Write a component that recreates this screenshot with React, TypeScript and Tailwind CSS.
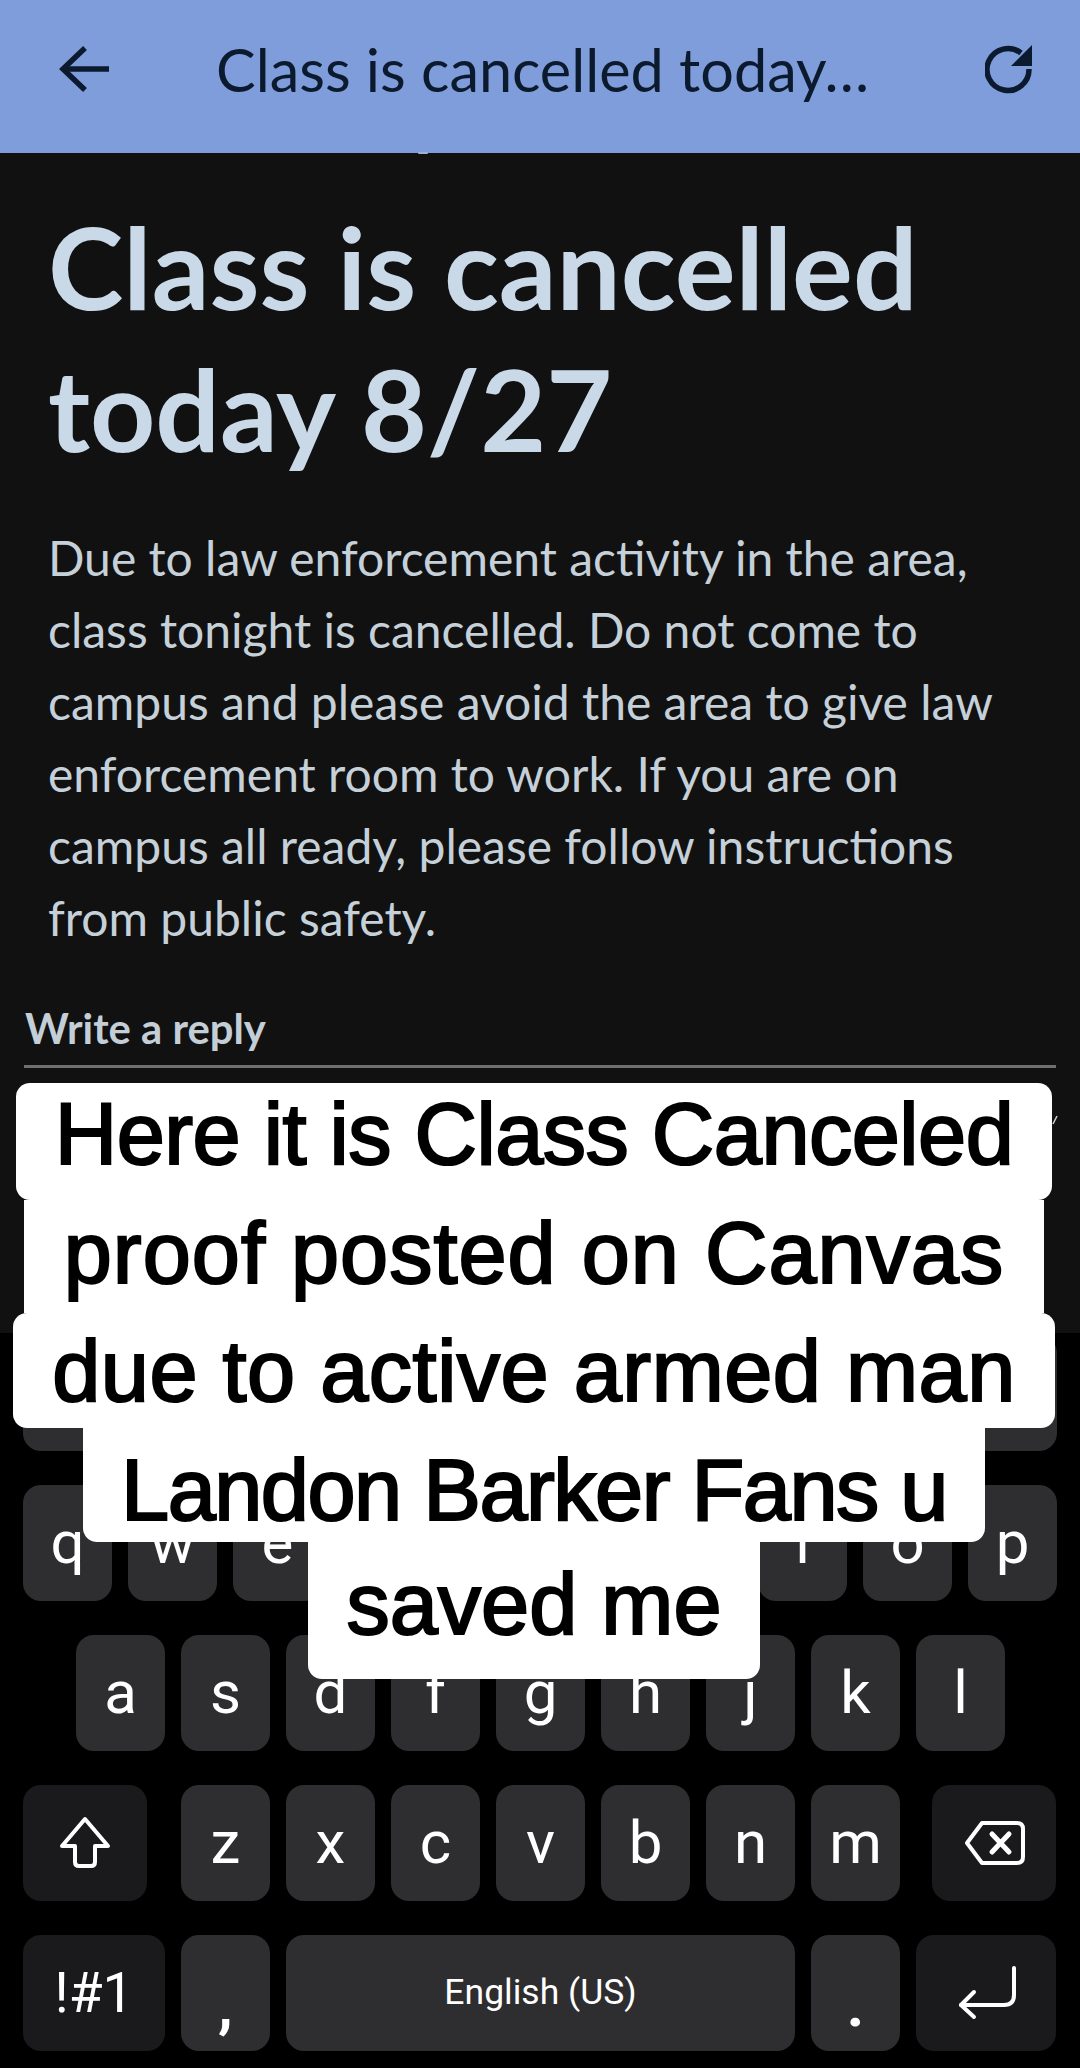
import React from "react";

const lato = "font-['Lato','Noto_Sans',sans-serif]";

function Key({ label, w = "w-[89px]", dark = false, children, labelClass = "text-[60px] font-normal" }: { label?: string; w?: string; dark?: boolean; children?: React.ReactNode; labelClass?: string }) {
  return (
    <div className={`${w} h-[116px] shrink-0 rounded-[18px] flex items-center justify-center text-white ${dark ? "bg-[#1a1a1c]" : "bg-[#2e2e30]"} ${labelClass}`}>
      {label}
      {children}
    </div>
  );
}

const Caption = ({ text, cls }: { text: string; cls: string }) => (
  <div className={`bg-white flex justify-center text-black text-center whitespace-nowrap font-['Liberation_Sans',Arial,sans-serif] text-[86.5px] [-webkit-text-stroke:2.2px_black] ${cls}`}>
    {text}
  </div>
);

export default function App() {
  const row1 = ["q", "w", "e", "r", "t", "y", "u", "i", "o", "p"];
  const row2 = ["a", "s", "d", "f", "g", "h", "j", "k", "l"];
  const row3 = ["z", "x", "c", "v", "b", "n", "m"];
  const keyFont = "font-['Roboto',sans-serif]";
  return (
    <div className="relative w-[1080px] h-[2068px] overflow-hidden bg-black flex flex-col">
      <header className={`h-[153px] shrink-0 bg-[#7f9cdb] flex items-start text-[#0c1a2e] ${lato}`}>
        <svg className="ml-[58px] mt-[44px] shrink-0" width="54" height="50" viewBox="0 0 54 50" fill="none" stroke="#0b1a2e" strokeWidth="5.5">
          <path d="M4 25H51" />
          <path d="M27 4L5 25L27 46" />
        </svg>
        <div className="ml-[104px] mt-[31px] w-[700px] text-[59.4px] leading-[76px] whitespace-nowrap">Class is cancelled today…</div>
        <svg className="ml-[69px] mt-[43px] shrink-0" width="54" height="52" viewBox="0 0 54 52" fill="none">
          <path d="M44 26A21 21 0 1 1 36 10" stroke="#0b1a2e" strokeWidth="5.5" />
          <path d="M47 2V23H26Z" fill="#0b1a2e" />
        </svg>
      </header>

      <main className={`h-[1180px] shrink-0 bg-[#111112] ${lato}`}>
        <h1 className="ml-[48px] mt-[42px] text-[#c9d9e8] font-bold text-[113.9px] leading-[142px] whitespace-nowrap">
          Class is cancelled
          <br />
          today 8/27
        </h1>
        <p className="ml-[48px] mt-[43px] text-[#c5d0d8] text-[48px] leading-[72px] whitespace-nowrap">
          Due to law enforcement activity in the area,
          <br />
          class tonight is cancelled. Do not come to
          <br />
          campus and please avoid the area to give law
          <br />
          enforcement room to work. If you are on
          <br />
          campus all ready, please follow instructions
          <br />
          from public safety.
        </p>
        <div className="ml-[25px] mt-[49px] text-[#c3ced6] font-bold text-[41.8px] leading-[50px]">Write a reply</div>
        <div className="ml-[24px] mt-[12px] w-[1032px] h-[3px] bg-[#6d6f71]" />
      </main>

      <section className={`flex-1 bg-black flex flex-col gap-[34px] pt-[2px] ${keyFont}`}>
        <div className="flex gap-[16px] pl-[23px]">
          {row1.map((k) => (
            <Key key={k} />
          ))}
        </div>
        <div className="flex gap-[16px] pl-[23px]">
          {row1.map((k) => (
            <Key key={k} label={k} />
          ))}
        </div>
        <div className="flex gap-[16px] pl-[76px]">
          {row2.map((k) => (
            <Key key={k} label={k} />
          ))}
        </div>
        <div className="flex pl-[23px]">
          <Key w="w-[124px]" dark>
            <svg width="52" height="54" viewBox="0 0 52 54" fill="none" stroke="#fff" strokeWidth="4" strokeLinejoin="round">
              <path d="M26 3L49 30H36V46Q36 50 32 50H20Q16 50 16 46V30H3Z" />
            </svg>
          </Key>
          <div className="flex gap-[16px] ml-[34px]">
            {row3.map((k) => (
              <Key key={k} label={k} />
            ))}
          </div>
          <div className="ml-[32px]">
            <Key w="w-[124px]" dark>
              <svg className="ml-[2px]" width="62" height="46" viewBox="0 0 62 46" fill="none" stroke="#fff" strokeWidth="4" strokeLinejoin="round" strokeLinecap="round">
                <path d="M18 3H53Q59 3 59 9V37Q59 43 53 43H18L3 23Z" />
                <path d="M28 14L45 32M45 14L28 32" strokeWidth="5" />
              </svg>
            </Key>
          </div>
        </div>
        <div className="flex gap-[16px] pl-[23px]">
          <Key w="w-[142px]" dark label="!#1" labelClass="text-[55px] font-normal" />
          <Key labelClass="text-[60px] font-bold">
            <span className="mt-[26px]">,</span>
          </Key>
          <Key w="w-[509px]" label="English (US)" labelClass="text-[35.5px] font-normal" />
          <Key labelClass="text-[60px] font-bold">
            <span className="mt-[26px]">.</span>
          </Key>
          <Key w="w-[140px]" dark>
            <svg className="ml-[4px]" width="62" height="56" viewBox="0 0 62 56" fill="none" stroke="#fff" strokeWidth="4" strokeLinecap="round" strokeLinejoin="round">
              <path d="M57 3V30Q57 40 47 40H4" />
              <path d="M17 27L4 40L17 52" />
            </svg>
          </Key>
        </div>
      </section>

      <div className="absolute left-0 right-[12px] top-[1083px] flex flex-col items-center">
        <Caption text="Here it is Class Canceled" cls="relative w-[1036px] h-[117px] leading-[103px] rounded-[14px] tracking-[-0.5px]" />
        <Caption text="proof posted on Canvas" cls="w-[1020px] h-[113px] leading-[106px] tracking-[1px]" />
        <Caption text="due to active armed man" cls="relative w-[1042px] h-[115px] leading-[116px] rounded-[14px] tracking-[0.5px]" />
        <Caption text="Landon Barker Fans u" cls="w-[902px] h-[114px] leading-[124px] rounded-b-[14px] tracking-[-1.5px]" />
        <Caption text="saved me" cls="w-[452px] h-[139px] leading-[129px] rounded-b-[14px] mt-[-2px]" />
      </div>

      <div className="absolute left-[418px] top-[152px] w-[10px] h-[2px] rounded-full bg-[#9fb0d8]" />
      <svg className="absolute left-[1052px] top-[1115px]" width="6" height="10" viewBox="0 0 6 10" fill="none" stroke="#c4d2de" strokeWidth="1.5">
        <path d="M1 9L5 1" />
      </svg>
    </div>
  );
}
